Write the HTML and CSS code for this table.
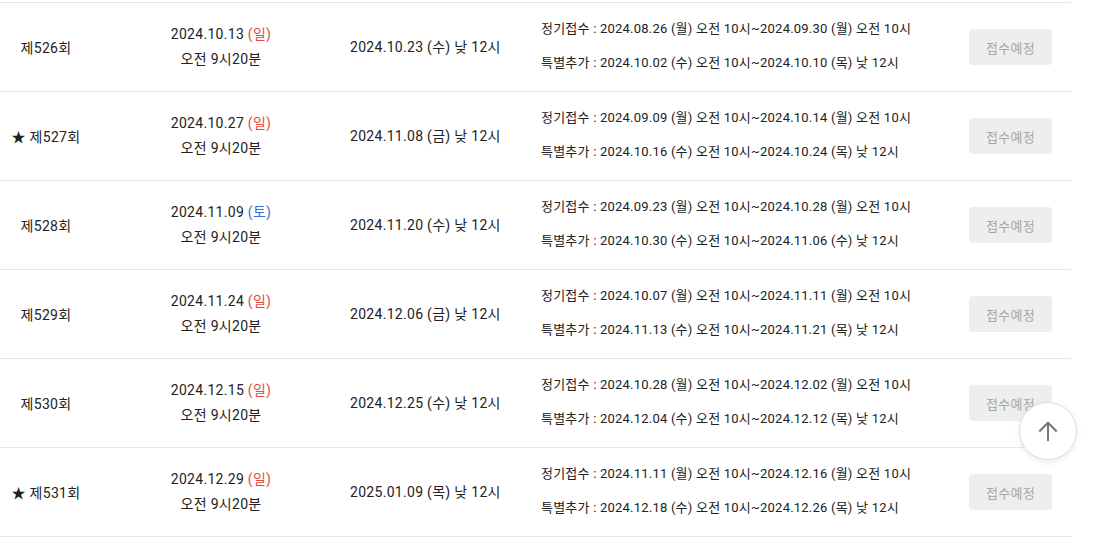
FILE: index.html
```html
<!DOCTYPE html>
<html lang="ko">
<head>
<meta charset="utf-8">
<title>회차 일정</title>
<link rel="stylesheet" href="styles.css">
</head>
<body>
<div class="table">
  <div class="row">
    <div class="c-round">제526회</div>
    <div class="c-date"><div>2024.10.13 <span class="sun">(일)</span></div><div>오전 9시20분</div></div>
    <div class="c-result">2024.10.23 (수) 낮 12시</div>
    <div class="c-period"><div>정기접수 : 2024.08.26 (월) 오전 10시~2024.09.30 (월) 오전 10시</div><div>특별추가 : 2024.10.02 (수) 오전 10시~2024.10.10 (목) 낮 12시</div></div>
    <div class="c-btn"><span class="btn">접수예정</span></div>
  </div>
  <div class="row">
    <div class="c-round">★ 제527회</div>
    <div class="c-date"><div>2024.10.27 <span class="sun">(일)</span></div><div>오전 9시20분</div></div>
    <div class="c-result">2024.11.08 (금) 낮 12시</div>
    <div class="c-period"><div>정기접수 : 2024.09.09 (월) 오전 10시~2024.10.14 (월) 오전 10시</div><div>특별추가 : 2024.10.16 (수) 오전 10시~2024.10.24 (목) 낮 12시</div></div>
    <div class="c-btn"><span class="btn">접수예정</span></div>
  </div>
  <div class="row">
    <div class="c-round">제528회</div>
    <div class="c-date"><div>2024.11.09 <span class="sat">(토)</span></div><div>오전 9시20분</div></div>
    <div class="c-result">2024.11.20 (수) 낮 12시</div>
    <div class="c-period"><div>정기접수 : 2024.09.23 (월) 오전 10시~2024.10.28 (월) 오전 10시</div><div>특별추가 : 2024.10.30 (수) 오전 10시~2024.11.06 (수) 낮 12시</div></div>
    <div class="c-btn"><span class="btn">접수예정</span></div>
  </div>
  <div class="row">
    <div class="c-round">제529회</div>
    <div class="c-date"><div>2024.11.24 <span class="sun">(일)</span></div><div>오전 9시20분</div></div>
    <div class="c-result">2024.12.06 (금) 낮 12시</div>
    <div class="c-period"><div>정기접수 : 2024.10.07 (월) 오전 10시~2024.11.11 (월) 오전 10시</div><div>특별추가 : 2024.11.13 (수) 오전 10시~2024.11.21 (목) 낮 12시</div></div>
    <div class="c-btn"><span class="btn">접수예정</span></div>
  </div>
  <div class="row">
    <div class="c-round">제530회</div>
    <div class="c-date"><div>2024.12.15 <span class="sun">(일)</span></div><div>오전 9시20분</div></div>
    <div class="c-result">2024.12.25 (수) 낮 12시</div>
    <div class="c-period"><div>정기접수 : 2024.10.28 (월) 오전 10시~2024.12.02 (월) 오전 10시</div><div>특별추가 : 2024.12.04 (수) 오전 10시~2024.12.12 (목) 낮 12시</div></div>
    <div class="c-btn"><span class="btn">접수예정</span></div>
  </div>
  <div class="row">
    <div class="c-round">★ 제531회</div>
    <div class="c-date"><div>2024.12.29 <span class="sun">(일)</span></div><div>오전 9시20분</div></div>
    <div class="c-result">2025.01.09 (목) 낮 12시</div>
    <div class="c-period"><div>정기접수 : 2024.11.11 (월) 오전 10시~2024.12.16 (월) 오전 10시</div><div>특별추가 : 2024.12.18 (수) 오전 10시~2024.12.26 (목) 낮 12시</div></div>
    <div class="c-btn"><span class="btn">접수예정</span></div>
  </div>
</div>
<button class="top-btn" aria-label="맨 위로">
  <svg width="22" height="22" viewBox="0 0 24 24" fill="none" stroke="#777" stroke-width="2.2" stroke-linecap="butt" stroke-linejoin="miter"><path d="M12 23V3"/><path d="M2.5 12.5L12 3l9.5 9.5"/></svg>
</button>
</body>
</html>
```
FILE: styles.css
```css
html, body {
  margin: 0;
  padding: 0;
  background: #fff;
}
body {
  padding-top: 2px;
  font-family: Roboto, "Noto Sans CJK KR", sans-serif;
  font-size: 14px;
  color: #222;
  letter-spacing: 0.3px;
}
.table {
  width: 1071px;
  border-top: 1px solid #e6e6e6;
}
.row {
  display: grid;
  grid-template-columns: 92px 258px 150px 450px 121px;
  height: 88px;
  border-bottom: 1px solid #e6e6e6;
  align-items: center;
}
.c-round, .c-date, .c-result, .c-btn {
  text-align: center;
  white-space: nowrap;
}
.c-round {
  margin-top: -1px;
}
.c-date {
  display: flex;
  flex-direction: column;
  gap: 5px;
  line-height: 20px;
  margin-top: -1px;
}
.c-result {
  line-height: 20px;
}
.c-period {
  padding-left: 41px;
  font-size: 13px;
  line-height: 20px;
  display: flex;
  flex-direction: column;
  gap: 14px;
  white-space: nowrap;
  letter-spacing: 0.22px;
  margin-top: -2px;
}
.sun { color: #e34a3c; }
.sat { color: #3f6fd0; }
.btn {
  display: inline-flex;
  align-items: center;
  justify-content: center;
  width: 83px;
  height: 36px;
  border-radius: 4px;
  background: #eeeeee;
  color: #a6a6a6;
  font-size: 13px;
  letter-spacing: 0.3px;
}
.top-btn {
  position: fixed;
  left: 1019px;
  top: 402px;
  width: 58px;
  height: 58px;
  border-radius: 50%;
  background: #fff;
  border: 1px solid #dedede;
  box-shadow: 0 2px 6px rgba(0,0,0,0.08);
  display: flex;
  align-items: center;
  justify-content: center;
  padding: 0;
}
```
